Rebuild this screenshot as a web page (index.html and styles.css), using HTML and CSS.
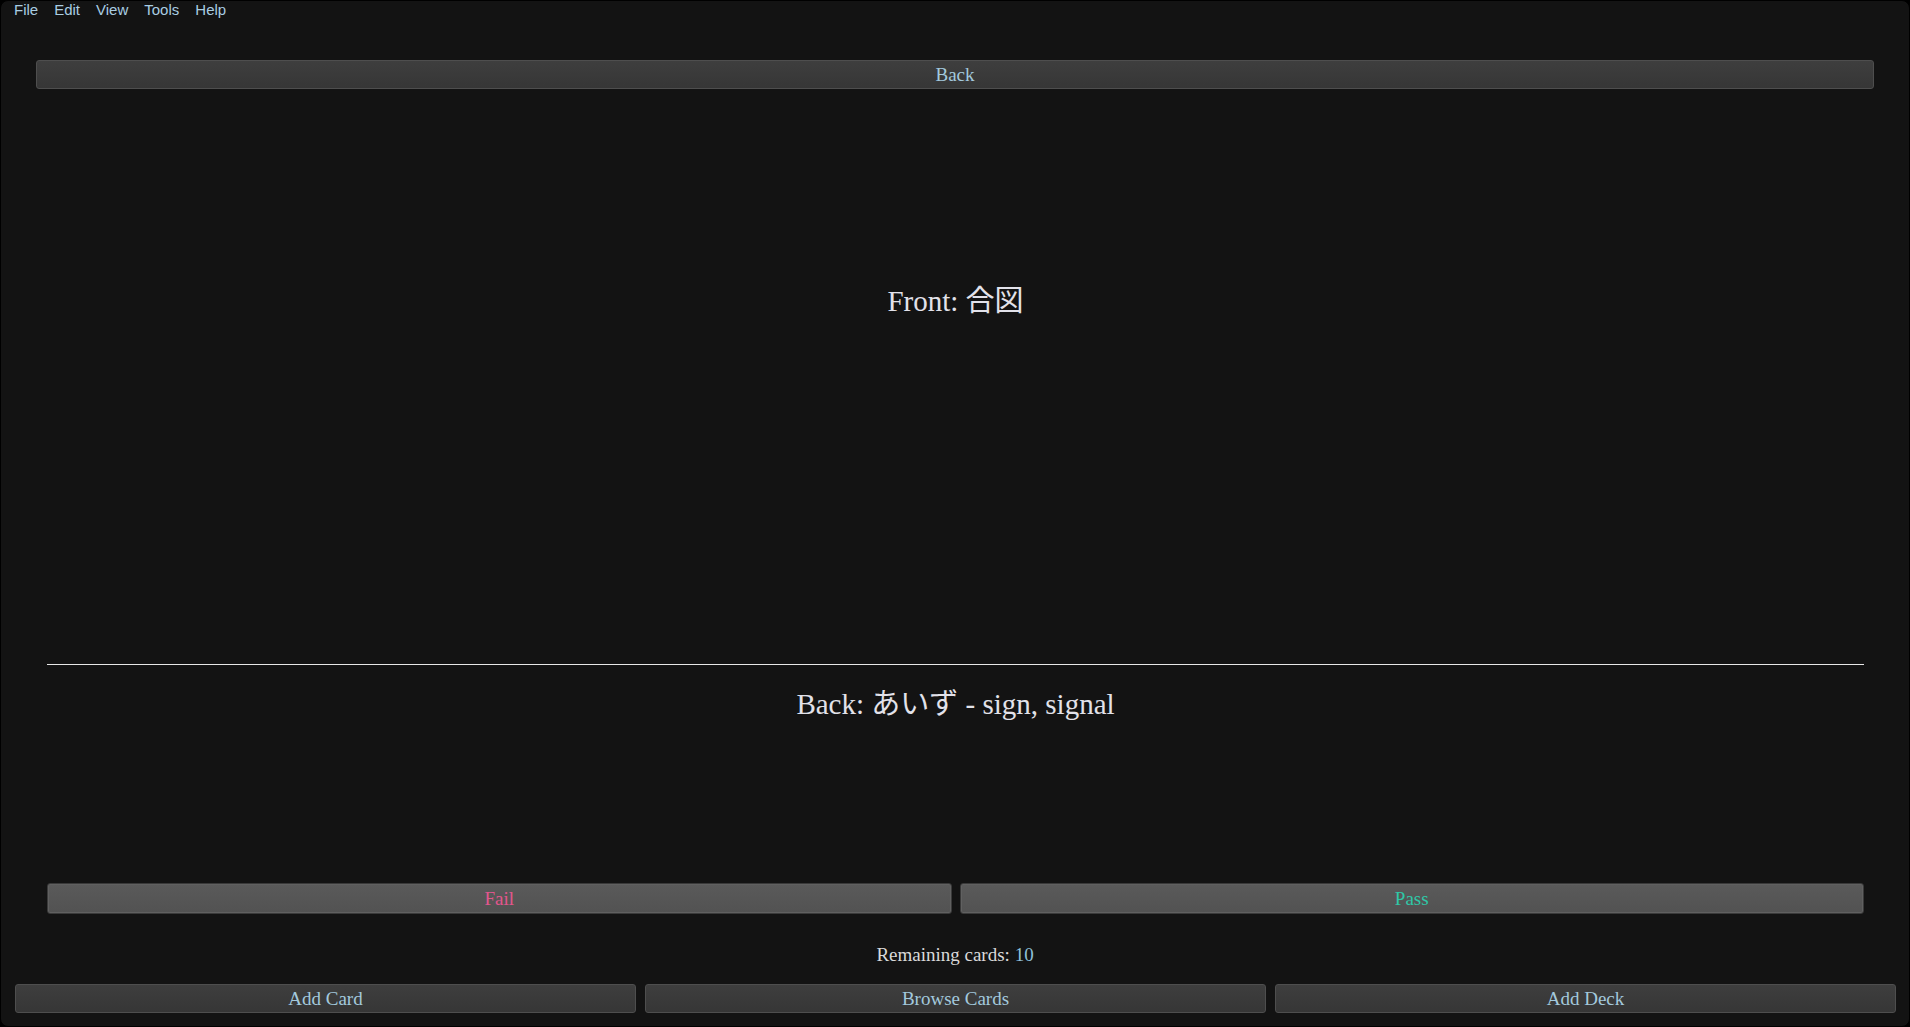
FILE: index.html
```html
<!DOCTYPE html>
<html>
<head>
<meta charset="utf-8">
<link rel="stylesheet" href="styles.css">
</head>
<body>
<div class="app">
  <div class="menubar">
    <span class="menu-item">File</span>
    <span class="menu-item">Edit</span>
    <span class="menu-item">View</span>
    <span class="menu-item">Tools</span>
    <span class="menu-item">Help</span>
  </div>
  <div class="back-row">
    <button class="btn btn-dark">Back</button>
  </div>
  <div class="card">
    <div class="front">
      <div class="card-text">Front: 合図</div>
    </div>
    <div class="divider"></div>
    <div class="back">
      <div class="card-text">Back: あいず - sign, signal</div>
    </div>
    <div class="answer-row">
      <button class="btn btn-light fail">Fail</button>
      <button class="btn btn-light pass">Pass</button>
    </div>
  </div>
  <div class="remaining">Remaining cards: <span class="count">10</span></div>
  <div class="bottom-bar">
    <button class="btn btn-dark">Add Card</button>
    <button class="btn btn-dark">Browse Cards</button>
    <button class="btn btn-dark">Add Deck</button>
  </div>
</div>
</body>
</html>
```
FILE: styles.css
```css
html, body {
  margin: 0;
  padding: 0;
  background: #000;
  height: 100%;
}
.app {
  box-sizing: border-box;
  height: 1027px;
  background: #131313;
  border: 1px solid #000;
  border-radius: 8px;
  display: flex;
  flex-direction: column;
  overflow: hidden;
  font-family: "Liberation Serif", "Noto Sans CJK JP", serif;
}
.menubar {
  height: 17px;
  display: flex;
  align-items: center;
  padding-left: 13px;
  font-family: "Liberation Sans", Arial, sans-serif;
  font-size: 15px;
  color: #a9cde2;
}
.menu-item {
  margin-right: 16px;
}
.back-row {
  margin-top: 42px;
  padding: 0 35px;
  display: flex;
}
.btn {
  box-sizing: border-box;
  flex: 1;
  height: 29px;
  border-radius: 3px;
  font-family: "Liberation Serif", "Noto Sans CJK JP", serif;
  font-size: 19px;
  padding: 0;
  margin: 0;
  line-height: 27px;
}
.btn-dark {
  background: linear-gradient(#3e3e3e, #363636);
  border: 1px solid #4e4e4e;
  color: #a3c9dd;
}
.btn-light {
  background: linear-gradient(#5a5a5a, #525252);
  border: 1px solid #3a3a3a;
  box-shadow: inset 0 0 0 1px #606060;
  height: 31px;
}
.fail { color: #e2568d; }
.pass { color: #2fc7a7; }
.card {
  padding: 0 45px 0 46px;
  display: flex;
  flex-direction: column;
}
.front {
  height: 575px;
  padding-top: 195px;
  box-sizing: border-box;
}
.card-text {
  text-align: center;
  font-size: 29px;
  line-height: 34px;
  color: #e2e2ea;
}
.divider {
  height: 1px;
  background: #e8e8e8;
}
.back {
  height: 218px;
  padding-top: 22px;
  box-sizing: border-box;
}
.answer-row {
  display: flex;
  gap: 8px;
}
.remaining {
  margin-top: 29px;
  text-align: center;
  font-size: 19px;
  line-height: 24px;
  color: #dadada;
}
.count { color: #8fc0da; }
.bottom-bar {
  margin-top: 17px;
  padding: 0 13px 0 14px;
  display: flex;
  gap: 9px;
}
```
